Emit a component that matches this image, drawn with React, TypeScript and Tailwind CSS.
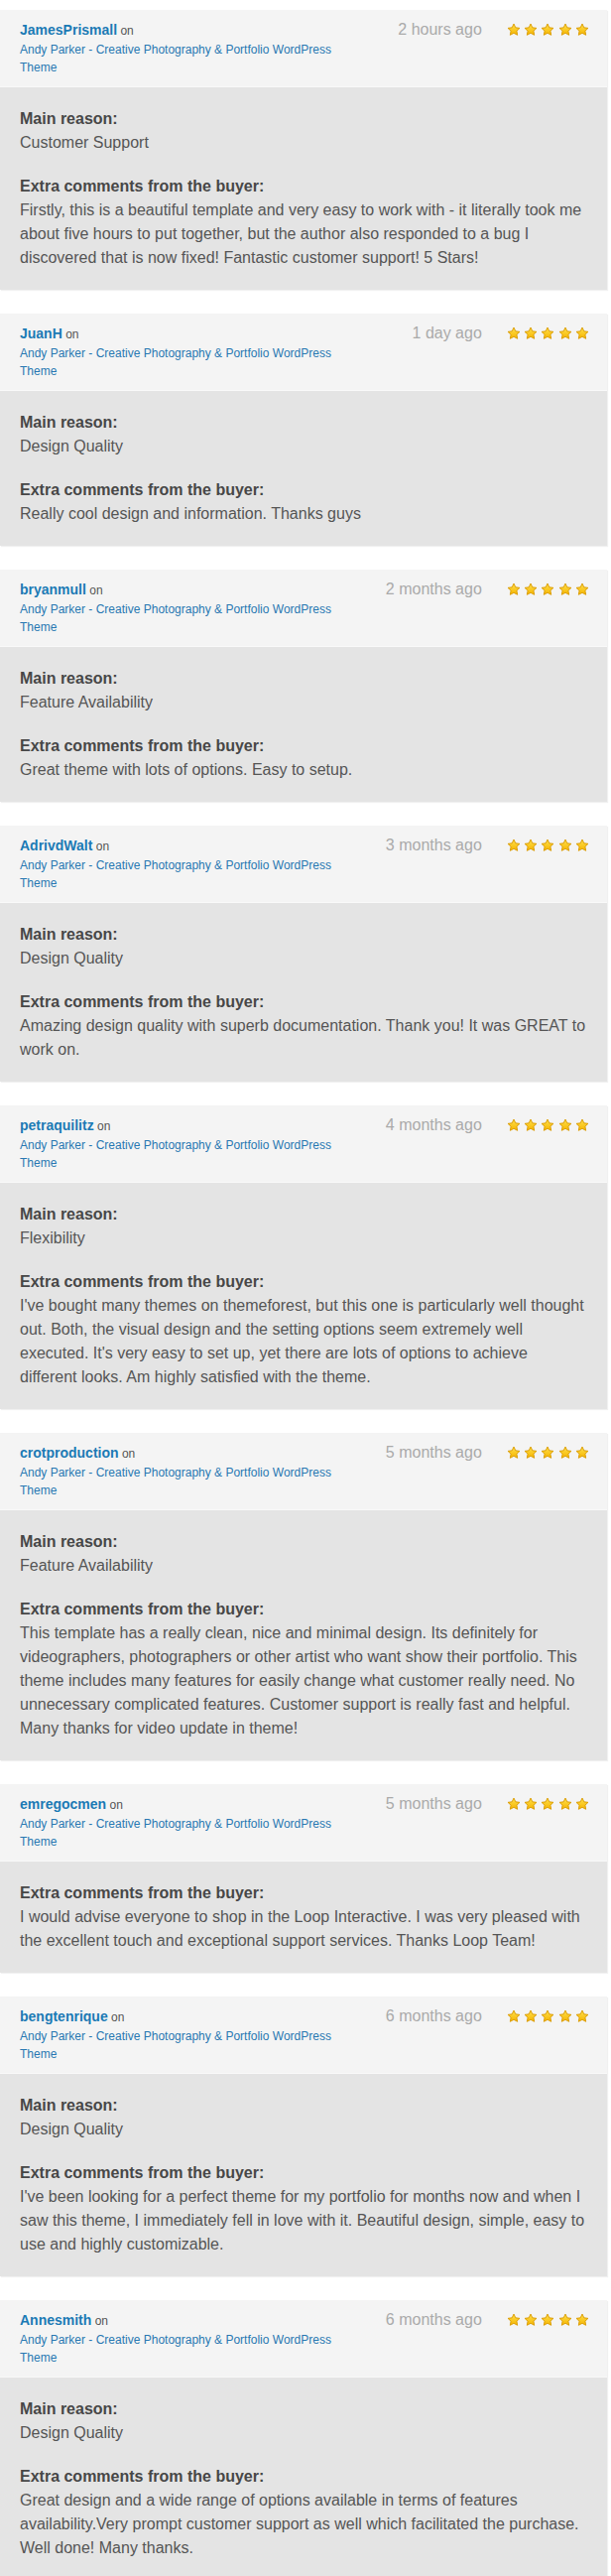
import React from 'react'

type Review = {
  user: string
  time: string
  reason?: string
  comment: string
}

const reviews: Review[] = [
  {
    user: 'JamesPrismall',
    time: '2 hours ago',
    reason: 'Customer Support',
    comment:
      'Firstly, this is a beautiful template and very easy to work with - it literally took me about five hours to put together, but the author also responded to a bug I discovered that is now fixed! Fantastic customer support! 5 Stars!',
  },
  {
    user: 'JuanH',
    time: '1 day ago',
    reason: 'Design Quality',
    comment: 'Really cool design and information. Thanks guys',
  },
  {
    user: 'bryanmull',
    time: '2 months ago',
    reason: 'Feature Availability',
    comment: 'Great theme with lots of options. Easy to setup.',
  },
  {
    user: 'AdrivdWalt',
    time: '3 months ago',
    reason: 'Design Quality',
    comment: 'Amazing design quality with superb documentation. Thank you! It was GREAT to work on.',
  },
  {
    user: 'petraquilitz',
    time: '4 months ago',
    reason: 'Flexibility',
    comment:
      "I've bought many themes on themeforest, but this one is particularly well thought out. Both, the visual design and the setting options seem extremely well executed. It's very easy to set up, yet there are lots of options to achieve different looks. Am highly satisfied with the theme.",
  },
  {
    user: 'crotproduction',
    time: '5 months ago',
    reason: 'Feature Availability',
    comment:
      'This template has a really clean, nice and minimal design. Its definitely for videographers, photographers or other artist who want show their portfolio. This theme includes many features for easily change what customer really need. No unnecessary complicated features. Customer support is really fast and helpful. Many thanks for video update in theme!',
  },
  {
    user: 'emregocmen',
    time: '5 months ago',
    comment:
      'I would advise everyone to shop in the Loop Interactive. I was very pleased with the excellent touch and exceptional support services. Thanks Loop Team!',
  },
  {
    user: 'bengtenrique',
    time: '6 months ago',
    reason: 'Design Quality',
    comment:
      "I've been looking for a perfect theme for my portfolio for months now and when I saw this theme, I immediately fell in love with it. Beautiful design, simple, easy to use and highly customizable.",
  },
  {
    user: 'Annesmith',
    time: '6 months ago',
    reason: 'Design Quality',
    comment:
      'Great design and a wide range of options available in terms of features availability.Very prompt customer support as well which facilitated the purchase. Well done! Many thanks.',
  },
]

function Star() {
  return (
    <svg width="14" height="14" viewBox="0 0 24 24">
      <defs>
        <linearGradient id="starFill" x1="0" y1="0" x2="0" y2="1">
          <stop offset="0%" stopColor="#ffe14d" />
          <stop offset="100%" stopColor="#f5b400" />
        </linearGradient>
      </defs>
      <path
        d="M12 1.8l3.1 6.5 7.1.9-5.2 4.9 1.3 7-6.3-3.4-6.3 3.4 1.3-7-5.2-4.9 7.1-.9z"
        fill="url(#starFill)"
        stroke="#d99a00"
        strokeWidth="1.6"
        strokeLinejoin="round"
      />
    </svg>
  )
}

function ReviewCard({ review }: { review: Review }) {
  return (
    <div className="w-[612px] shadow-[1px_1px_1px_rgba(0,0,0,0.06)]">
      {/* header */}
      <div className="flex justify-between bg-[#f4f4f4] pl-5 pr-[18px] py-[10px] border-b border-[#f9f9f9]">
        <div className="w-[330px]">
          <div className="leading-5">
            <a className="text-[14px] font-bold text-[#1b7ab5]">{review.user}</a>
            <span className="text-[12px] text-[#555]"> on</span>
          </div>
          <a className="block text-[12px] leading-[18px] text-[#2878b2]">
            Andy Parker - Creative Photography &amp; Portfolio WordPress Theme
          </a>
        </div>
        <div className="flex items-start">
          <span className="text-[16px] leading-5 text-[#aaaaaa]">{review.time}</span>
          <div className="ml-[25px] mt-[3px] flex gap-[3.3px]">
            {[0, 1, 2, 3, 4].map((i) => (
              <Star key={i} />
            ))}
          </div>
        </div>
      </div>
      {/* body */}
      <div className="bg-[#e4e4e4] pl-5 pr-[19px] py-5 text-[16px] leading-6">
        {review.reason && (
          <div className="mb-5">
            <div className="font-bold text-[#474747]">Main reason:</div>
            <div className="text-[#555]">{review.reason}</div>
          </div>
        )}
        <div className="font-bold text-[#474747]">Extra comments from the buyer:</div>
        <p className="text-[#555]">{review.comment}</p>
      </div>
    </div>
  )
}

export default function App() {
  return (
    <main className="min-h-screen bg-white pt-[10px] font-['Liberation_Sans',Arial,sans-serif]">
      <div className="flex flex-col gap-6">
        {reviews.map((r) => (
          <ReviewCard key={r.user} review={r} />
        ))}
      </div>
    </main>
  )
}
